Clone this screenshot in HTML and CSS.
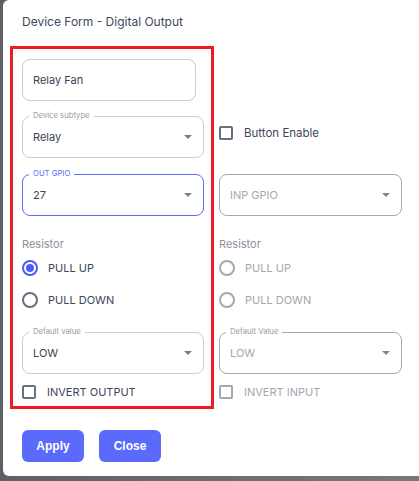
FILE: index.html
```html
<!DOCTYPE html>
<html>
<head>
<meta charset="utf-8">
<link rel="stylesheet" href="styles.css">
</head>
<body>
<div class="modal">
  <h1 class="title">Device Form - Digital Output</h1>
  <div class="form">
    <div class="col col-main">
      <div class="field"><span class="value">Relay Fan</span></div>
      <div class="field select">
        <span class="flabel">Device subtype</span>
        <span class="value">Relay</span><span class="arrow"></span>
      </div>
      <div class="field select focused">
        <span class="flabel">OUT GPIO</span>
        <span class="value">27</span><span class="arrow"></span>
      </div>
      <div class="group-label">Resistor</div>
      <div class="radio-row"><span class="radio checked"></span><span class="opt">PULL UP</span></div>
      <div class="radio-row"><span class="radio"></span><span class="opt">PULL DOWN</span></div>
      <div class="field select sel-default">
        <span class="flabel">Default value</span>
        <span class="value">LOW</span><span class="arrow"></span>
      </div>
      <div class="check-row"><span class="box"></span><span class="opt">INVERT OUTPUT</span></div>
    </div>
    <div class="col col-side">
      <div class="spacer"></div>
      <div class="check-row enable"><span class="box"></span><span class="opt case">Button Enable</span></div>
      <div class="field select dis-field">
        <span class="value ph">INP GPIO</span><span class="arrow"></span>
      </div>
      <div class="group-label">Resistor</div>
      <div class="radio-row dis"><span class="radio"></span><span class="opt">PULL UP</span></div>
      <div class="radio-row dis"><span class="radio"></span><span class="opt">PULL DOWN</span></div>
      <div class="field select sel-default dis-field">
        <span class="flabel">Default Value</span>
        <span class="value ph">LOW</span><span class="arrow"></span>
      </div>
      <div class="check-row dis"><span class="box"></span><span class="opt">INVERT INPUT</span></div>
    </div>
  </div>
  <div class="actions">
    <button class="btn">Apply</button>
    <button class="btn">Close</button>
  </div>
</div>
</body>
</html>
```
FILE: styles.css
```css
html, body {
  margin: 0;
  padding: 0;
  height: 100%;
  overflow: hidden;
}
body {
  background: linear-gradient(90deg, #5d6066 0%, #75787d 100%);
  font-family: Inter, "Noto Sans", sans-serif;
}
.modal {
  margin-left: 3px;
  width: calc(100vw - 3px);
  height: 476px;
  background: #fff;
  border-radius: 6px 0 0 6px;
  box-sizing: border-box;
  padding-top: 13px;
}
.title {
  margin: 0 0 0 19px;
  font-size: 12px;
  font-weight: 400;
  line-height: 18px;
  color: #3d4860;
}
.form {
  display: flex;
  margin-top: 15px;
  margin-left: 7px;
  gap: 5px;
}
.col {
  display: flex;
  flex-direction: column;
}
.col-main {
  width: 182px;
  border: 3px solid #ec1c24;
  padding: 10px 7px 4px 9px;
}
.col-side {
  width: 183px;
  padding-top: 13px;
}
.spacer {
  height: 42px;
}
.field {
  position: relative;
  height: 42px;
  box-sizing: border-box;
  border: 1px solid #c9ccd2;
  border-radius: 8px;
  display: flex;
  align-items: center;
  padding: 0 11px 0 10px;
}
.col-main .field:first-child {
  width: 174px;
}
.field + .field {
  margin-top: 15px;
}
.col-side .spacer + .check-row {
  height: 34px;
  margin-top: 15px;
}
.col-side .check-row.enable + .field {
  margin-top: 24px;
}
.col-main .field.focused {
  margin-top: 16px;
}
.field.focused {
  border-color: #5c6cf6;
}
.value {
  flex: 1;
  font-size: 11px;
  color: #3a4458;
}
.value.ph {
  color: #a2a7b0;
}
.arrow {
  width: 0;
  height: 0;
  border-left: 4.5px solid transparent;
  border-right: 4.5px solid transparent;
  border-top: 4.5px solid #7c818b;
}
.col-side .arrow {
  border-top-color: #80858f;
}
.flabel {
  position: absolute;
  left: 6px;
  top: -6px;
  padding: 0 4px;
  background: #fff;
  font-size: 7.7px;
  line-height: 10px;
  color: #989ca5;
}
.focused .flabel {
  color: #5c6cf6;
}
.dis-field {
  border-color: #a4a9b3;
}
.group-label {
  margin-top: 20px;
  font-size: 11px;
  line-height: 16px;
  color: #8c919b;
}
.radio-row {
  height: 32px;
  display: flex;
  align-items: center;
  gap: 10px;
}
.radio {
  width: 16px;
  height: 16px;
  box-sizing: border-box;
  border: 2px solid #666e80;
  border-radius: 50%;
  position: relative;
}
.radio.checked {
  border-color: #4b5cf5;
}
.radio.checked::after {
  content: "";
  position: absolute;
  left: 2px;
  top: 2px;
  width: 8px;
  height: 8px;
  border-radius: 50%;
  background: #4b5cf5;
}
.opt {
  font-size: 11px;
  color: #3d4658;
}
.radio-row + .field {
  margin-top: 16px;
}
.check-row {
  display: flex;
  align-items: center;
  gap: 11px;
  height: 20px;
}
.field + .check-row {
  margin-top: 8px;
}
.box {
  width: 14px;
  height: 14px;
  box-sizing: border-box;
  border: 2px solid #666e80;
  border-radius: 2px;
}
.dis .radio, .dis .box {
  border-color: #a3a8b1;
}
.dis .opt {
  color: #a2a7b0;
}
.case {
  font-size: 11.5px;
}
.actions {
  display: flex;
  gap: 15px;
  margin: 21px 0 0 19px;
}
.btn {
  width: 62px;
  height: 32px;
  border: none;
  border-radius: 6px;
  background: #5a6bfb;
  color: #fff;
  font-family: "Liberation Sans", Arial, sans-serif;
  font-weight: 700;
  font-size: 12px;
  padding: 0;
}
```
